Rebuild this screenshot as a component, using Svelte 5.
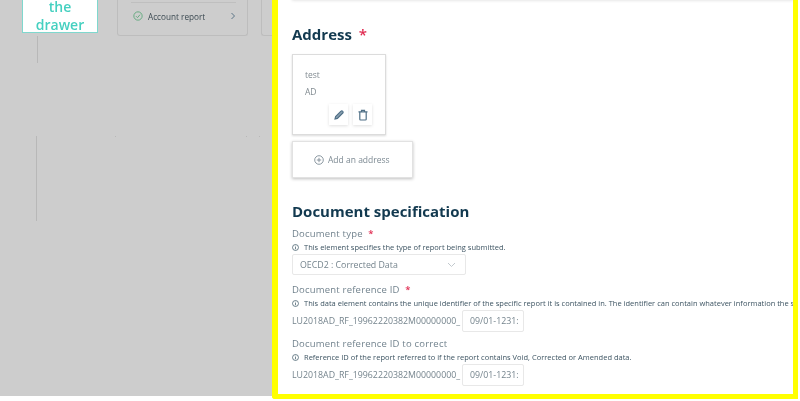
<script>
	let fields = [
		{label: "Document reference ID", required: true, hint: "This data element contains the unique identifier of the specific report it is contained in. The identifier can contain whatever information the sender uses to track the report", value: "09/01-1231:"},
		{label: "Document reference ID to correct", required: false, hint: "Reference ID of the report referred to if the report contains Void, Corrected or Amended data.", value: "09/01-1231:"}
	]
</script>

<div class="page">
	<div class="backdrop">
		<div class="top-row">
			<div class="open-btn"><div class="open-text">the<br />drawer</div></div>
			<div class="report-card">
				<div class="report-row">
					<svg class="check" width="10" height="10" viewBox="0 0 12 12"><circle cx="6" cy="6" r="5" fill="none" stroke="#5fa97c" stroke-width="1.1" /><path d="M3.6 6.2 5.4 8l3-3.6" fill="none" stroke="#5fa97c" stroke-width="1.1" /></svg>
					<span>Account report</span>
					<svg class="chev" width="6" height="8" viewBox="0 0 6 8"><path d="M1.5 1 4.5 4 1.5 7" fill="none" stroke="#5b7486" stroke-width="1" /></svg>
				</div>
			</div>
			<div class="next-card"></div>
		</div>
		<div class="line short"></div>
		<div class="line long"></div>
	</div>

	<div class="drawer">
		<div class="clipped-card"></div>
		<h2 class="address-title">Address <span class="star">*</span></h2>
		<div class="address-card">
			<p>test</p>
			<p class="country">AD</p>
			<div class="actions">
				<button aria-label="Edit">
					<svg width="12" height="12" viewBox="0 0 12 12"><path d="M2 10 2.6 7.6 8 2.2a1.1 1.1 0 0 1 1.6 0l.2.2a1.1 1.1 0 0 1 0 1.6L4.4 9.4Z" fill="#8aa0b0" stroke="#4f6f86" stroke-width="1.1" /></svg>
				</button>
				<button aria-label="Delete">
					<svg width="12" height="12" viewBox="0 0 12 12"><path d="M1.5 2.8h9M4.5 2.6V1.3h3v1.3M2.8 3v7.2a.8.8 0 0 0 .8.8h4.8a.8.8 0 0 0 .8-.8V3" fill="none" stroke="#4f6f86" stroke-width="1.2" /></svg>
				</button>
			</div>
		</div>
		<div class="add-card">
			<svg width="10" height="10" viewBox="0 0 10 10"><circle cx="5" cy="5" r="4.3" fill="none" stroke="#6f7f8a" stroke-width="0.8" /><path d="M5 2.8v4.4M2.8 5h4.4" stroke="#6f7f8a" stroke-width="0.8" /></svg>
			<span>Add an address</span>
		</div>

		<h2 class="spec-title">Document specification</h2>

		<div class="field first">
			<div class="label">Document type <span class="star">*</span></div>
			<div class="hint">
				<svg width="7" height="7" viewBox="0 0 8 8"><circle cx="4" cy="4" r="3.4" fill="none" stroke="#33505f" stroke-width="0.8" /><path d="M4 3.4v2.6M4 2v.8" stroke="#33505f" stroke-width="0.8" /></svg>
				<span>This element specifies the type of report being submitted.</span>
			</div>
			<div class="select">
				<span>OECD2 : Corrected Data</span>
				<svg width="9" height="6" viewBox="0 0 9 6"><path d="M1 1 4.5 4.5 8 1" fill="none" stroke="#c2c9ce" stroke-width="1" /></svg>
			</div>
		</div>

		{#each fields as field}
			<div class="field">
				<div class="label">{field.label} {#if field.required}<span class="star">*</span>{/if}</div>
				<div class="hint">
					<svg width="7" height="7" viewBox="0 0 8 8"><circle cx="4" cy="4" r="3.4" fill="none" stroke="#33505f" stroke-width="0.8" /><path d="M4 3.4v2.6M4 2v.8" stroke="#33505f" stroke-width="0.8" /></svg>
					<span>{field.hint}</span>
				</div>
				<div class="ref-row">
					<span class="prefix">LU2018AD_RF_19962220382M00000000_</span>
					<div class="ref-input">{field.value}</div>
				</div>
			</div>
		{/each}
	</div>
</div>

<style>
	:global(body) {
		margin: 0;
		background: #fff;
	}

	.page {
		display: flex;
		width: 800px;
		height: 401px;
		overflow: hidden;
		font-family: "Open Sans", sans-serif;
		box-sizing: border-box;
		filter: blur(0.35px);
	}

	.backdrop {
		width: 272px;
		height: 396px;
		flex: none;
		background: #cdcdcd;
		overflow: hidden;
	}

	.top-row {
		display: flex;
		align-items: flex-end;
		height: 36px;
		padding-left: 22px;
	}

	.open-btn {
		width: 76px;
		height: 33px;
		flex: none;
		box-sizing: border-box;
		margin-bottom: 3px;
		background: #fff;
		border: 1px solid #7fd8ce;
		border-top: 0;
		overflow: hidden;
		color: #45d0c0;
		font-size: 14px;
		font-weight: 600;
		line-height: 18px;
		text-align: center;
	}

	.open-text {
		margin-top: -2px;
	}

	.report-card {
		width: 131px;
		flex: none;
		box-sizing: border-box;
		margin-left: 19px;
		padding: 0 11px 0 13px;
		border: 1px solid #bdbdbd;
		border-top: 0;
		border-radius: 0 0 3px 3px;
	}

	.report-row {
		display: flex;
		align-items: center;
		height: 33px;
		padding: 0 0 6px 2px;
		box-sizing: border-box;
		border-top: 1px solid #bfbfbf;
		margin-top: 2px;
		font-size: 8.2px;
		color: #3c4a52;
	}

	.report-row span {
		margin-left: 5px;
		flex: 1;
	}

	.next-card {
		width: 11px;
		height: 36px;
		margin-left: 13px;
		flex: none;
		border: 1px solid #bdbdbd;
		border-width: 0 0 1px 1px;
		border-radius: 0 0 0 3px;
		box-sizing: border-box;
	}

	.line {
		width: 1px;
		background: #b8b8b8;
	}

	.short {
		height: 27px;
		margin-left: 37px;
	}

	.long {
		height: 85px;
		margin-left: 36px;
		margin-top: 73px;
	}

	.long::after {
		content: "";
		display: block;
		width: 1px;
		height: 1px;
		box-shadow: 79px 0 #b8b8b8, 210px 0 #b8b8b8, 223px 0 #b8b8b8;
	}

	.drawer {
		width: 526px;
		height: 399px;
		flex: none;
		box-sizing: border-box;
		border: solid #ffff00;
		border-width: 0 5px 5px 6px;
		border-radius: 0 0 0 3px;
		padding-left: 14px;
		overflow: hidden;
		background: #fff;
	}

	.clipped-card {
		height: 1px;
		margin-top: -1px;
		box-shadow: 0 0 3px rgba(0, 0, 0, 0.3);
	}

	h2 {
		margin: 0;
		color: #12394f;
		font-size: 15px;
		font-weight: 700;
		line-height: 22px;
	}

	.address-title {
		margin-top: 23px;
	}

	.star {
		color: #e0294f;
		font-weight: 600;
		margin-left: 3px;
	}

	.address-card {
		width: 94px;
		height: 81px;
		margin-top: 9px;
		box-sizing: border-box;
		border: 1px solid #dcdcdc;
		box-shadow: 0 1px 2px rgba(0, 0, 0, 0.15);
		padding: 14px 0 0 12px;
		font-size: 8.5px;
		color: #808a90;
	}

	.address-card p {
		margin: 0;
		line-height: 12px;
	}

	.address-card .country {
		margin-top: 5px;
	}

	.actions {
		display: flex;
		gap: 5px;
		justify-content: flex-end;
		margin: 6px 13px 0 0;
	}

	button {
		width: 19px;
		height: 21px;
		padding: 0;
		display: flex;
		align-items: center;
		justify-content: center;
		border: 0;
		background: #fff;
		box-shadow: 0 1px 3px rgba(0, 0, 0, 0.13);
	}

	.add-card {
		width: 121px;
		height: 37px;
		margin-top: 6px;
		box-sizing: border-box;
		display: flex;
		align-items: center;
		gap: 4px;
		padding-left: 21px;
		border: 1px solid #e2e2e2;
		box-shadow: 0 1px 3px rgba(0, 0, 0, 0.25);
		font-size: 8.5px;
		color: #7d8a93;
	}

	.spec-title {
		margin-top: 22px;
	}

	.field {
		margin-top: 5px;
	}

	.field.first {
		padding-bottom: 3px;
	}

	.label {
		font-size: 9.5px;
		line-height: 14px;
		color: #72838e;
		letter-spacing: 0.2px;
	}

	.hint {
		display: flex;
		align-items: center;
		gap: 5px;
		height: 13px;
		font-size: 7.5px;
		line-height: 13px;
		color: #3d5462;
		white-space: nowrap;
	}

	.hint svg {
		flex: none;
	}

	.select {
		width: 174px;
		height: 21px;
		box-sizing: border-box;
		display: flex;
		align-items: center;
		justify-content: space-between;
		padding: 0 9px 0 7px;
		border: 1px solid #e8e8e8;
		border-radius: 2px;
		font-size: 8.8px;
		color: #75848d;
	}

	.ref-row {
		display: flex;
		align-items: center;
		gap: 3px;
		height: 22px;
		font-size: 8.8px;
		color: #75848d;
	}

	.prefix {
		width: 167px;
		flex: none;
		white-space: nowrap;
	}

	.ref-input {
		width: 62px;
		height: 22px;
		box-sizing: border-box;
		display: flex;
		align-items: center;
		padding-left: 7px;
		border: 1px solid #e8e8e8;
		border-radius: 2px;
		white-space: nowrap;
		overflow: hidden;
	}
</style>
